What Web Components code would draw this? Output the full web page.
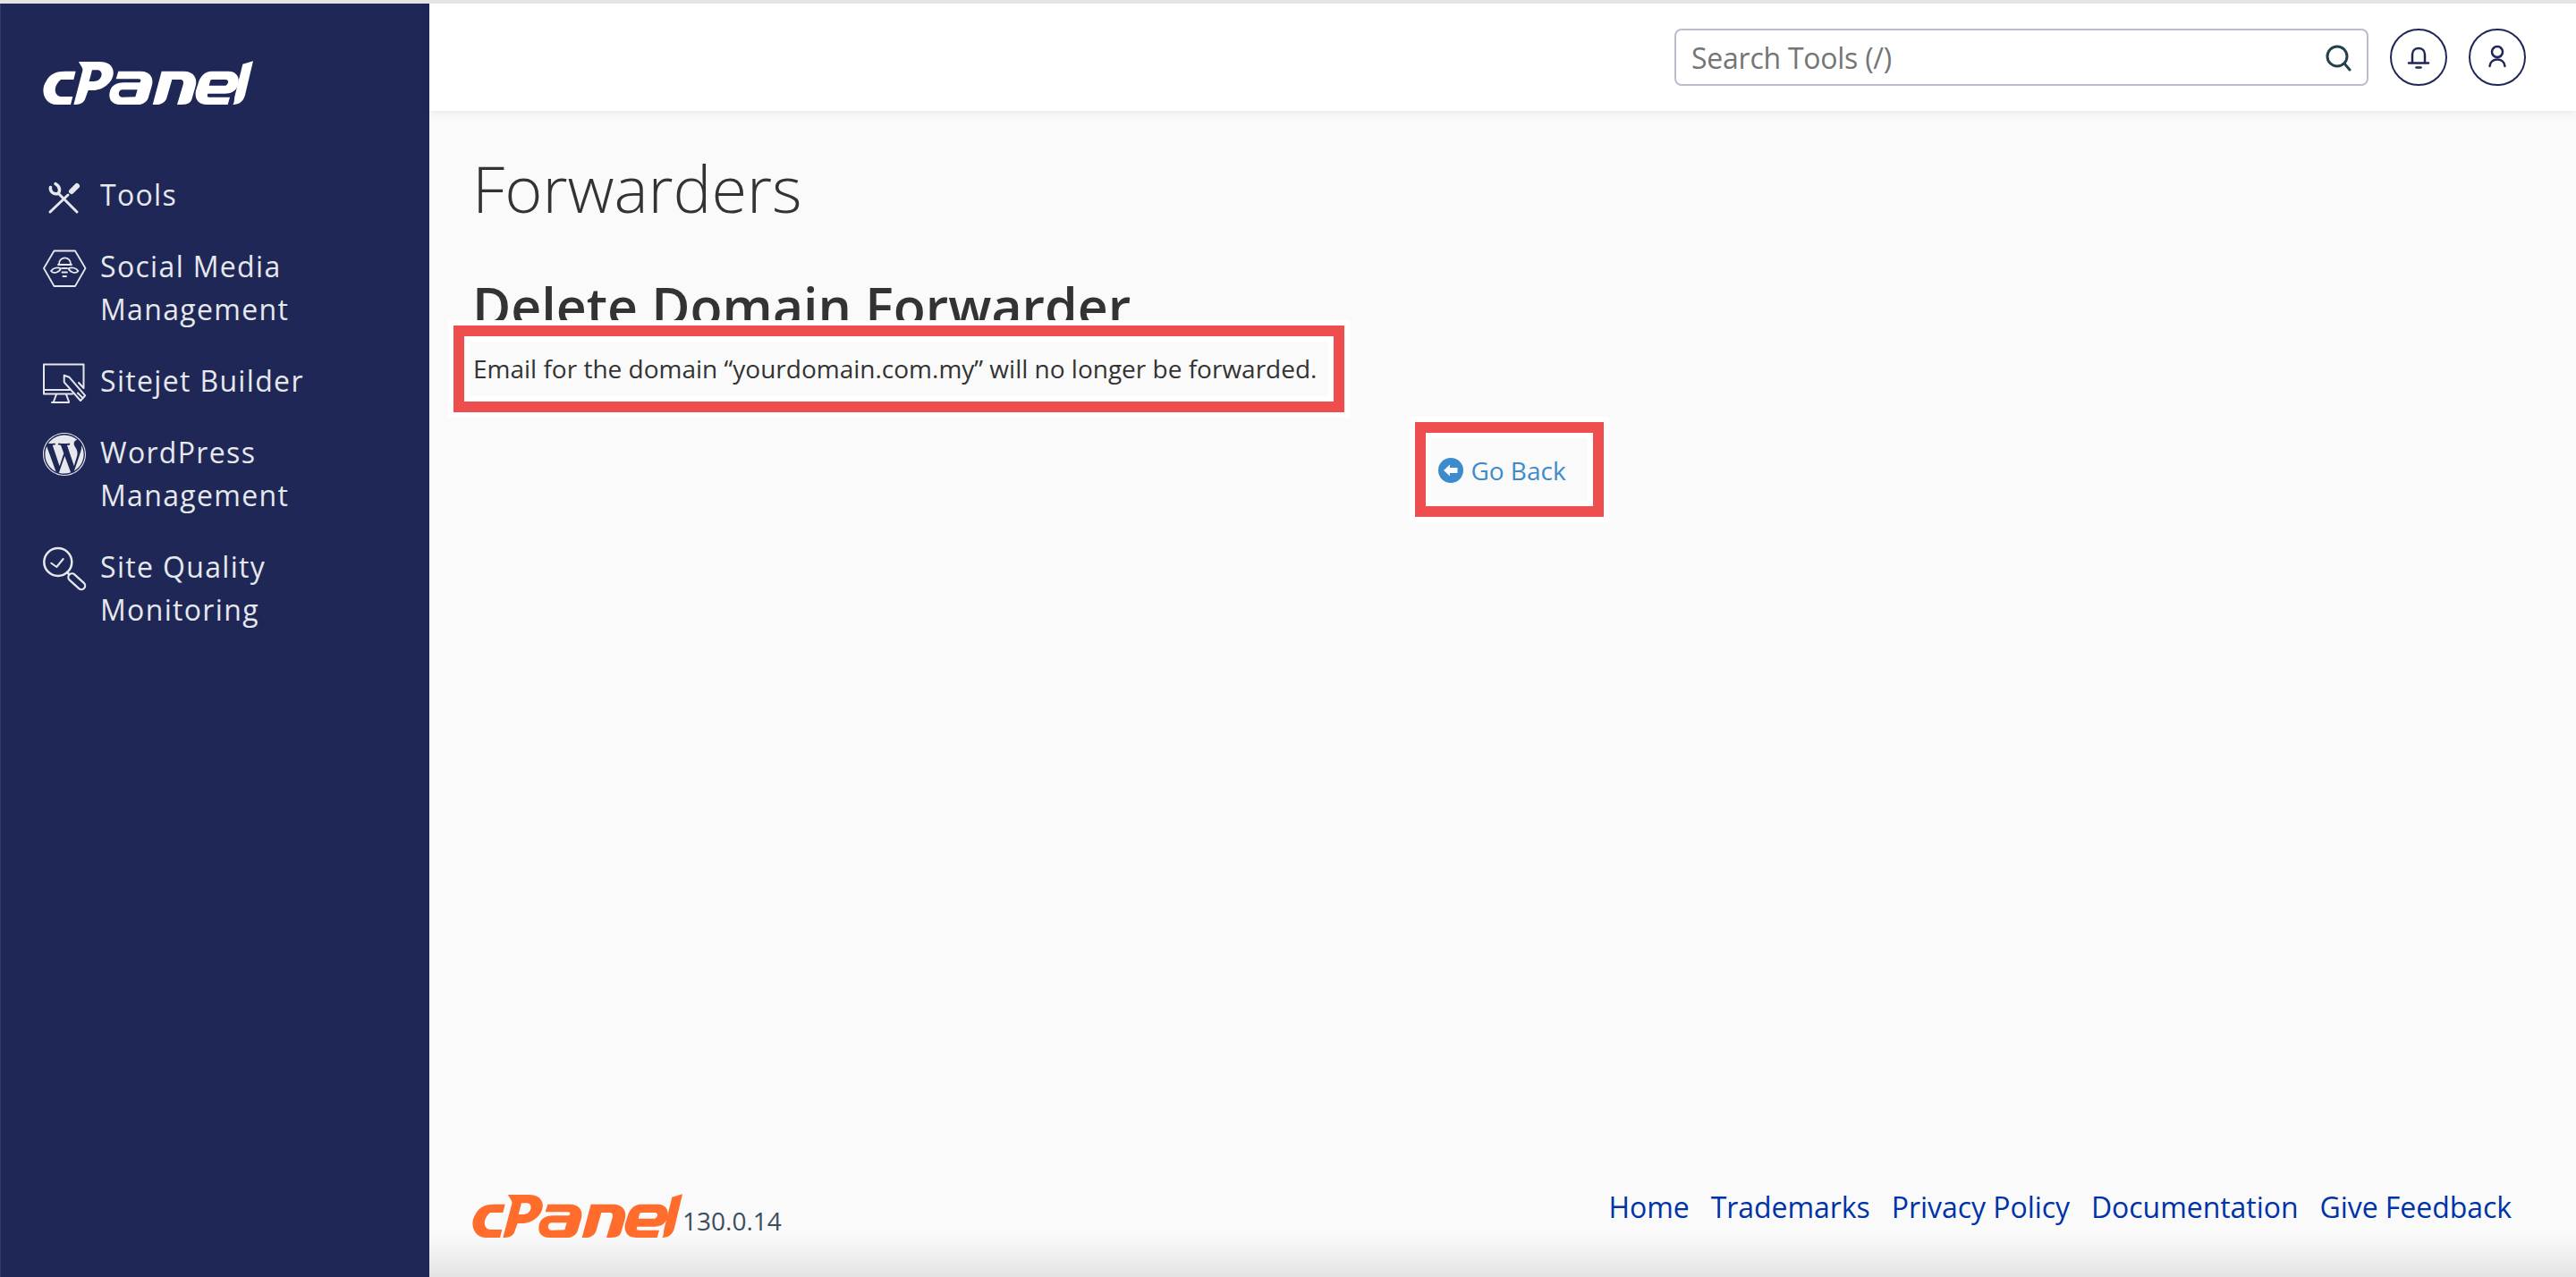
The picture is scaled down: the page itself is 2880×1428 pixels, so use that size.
<!DOCTYPE html>
<html lang="en">
<head>
<meta charset="utf-8">
<title>Forwarders</title>
<style>
  html, body { margin: 0; height: 100%; }
  body { font-family: "Open Sans", "Liberation Sans", sans-serif; background: #fafafa; }
</style>
</head>
<body>
<cp-app>
  <cp-sidebar slot="sidebar">
    <cp-nav-item icon="tools">Tools</cp-nav-item>
    <cp-nav-item icon="social">Social Media<br>Management</cp-nav-item>
    <cp-nav-item icon="sitejet">Sitejet Builder</cp-nav-item>
    <cp-nav-item icon="wordpress">WordPress<br>Management</cp-nav-item>
    <cp-nav-item icon="quality">Site Quality<br>Monitoring</cp-nav-item>
  </cp-sidebar>
  <cp-topbar slot="topbar"></cp-topbar>
  <cp-page heading="Forwarders" subheading="Delete Domain Forwarder">
    <cp-highlight>Email for the domain “yourdomain.com.my” will no longer be forwarded.</cp-highlight>
    <cp-back-link>Go Back</cp-back-link>
  </cp-page>
  <cp-footer slot="footer" version="130.0.14"></cp-footer>
</cp-app>

<script>
  // cPanel wordmark, used white in the sidebar and orange in the footer
  class CpLogo extends HTMLElement {
    constructor() {
      super();
      this.attachShadow({ mode: 'open' });
      this.shadowRoot.innerHTML = `
        <style>
          :host { display: block; width: 235px; height: 50px; color: inherit; }
          svg { display: block; width: 100%; height: 100%; fill: currentColor; }
        </style>
        <svg viewBox="25 25 705 150" preserveAspectRatio="none" role="img" aria-label="cPanel">
          <path d="M135 60L100 60C70 60 48 68 35 95C15 125 30 172 72 172L118 172L125 145L85 145C62 142 58 110 85 88L128 88Z"/>
          <path fill-rule="evenodd" d="M145 28L215 28C262 28 270 65 254 90C240 112 215 124 190 124L177 124L167 152C162 166 150 172 135 172L128 172L158 58C160 48 150 40 145 28ZM190 56L208 56C223 56 226 75 216 85C210 92 204 94 195 94L180 94Z"/>
          <path fill-rule="evenodd" d="M278 60L352 60C387 60 398 85 390 110L378 150C372 165 358 172 342 172L285 172C253 172 243 150 250 126C256 106 275 98 295 98L350 98L353 92C354 88 352 86 345 86L270 86ZM290 122L342 122L335 146L290 147C276 147 276 124 290 122Z"/>
          <path d="M423 60L497 60C532 60 544 85 537 110L524 155C519 168 507 172 490 172L475 172L495 105C498 93 494 88 484 88L458 88L440 150C435 165 420 172 405 172L393 172Z"/>
          <path fill-rule="evenodd" d="M590 60L647 60C677 60 688 85 678 110C670 128 657 135 635 135L578 135C574 145 577 147 587 147L652 147L645 172L575 172C543 172 533 150 538 125L546 100C553 75 570 60 590 60ZM592 88L638 88C648 88 650 100 638 108L582 108L585 97C586 91 588 88 592 88Z"/>
          <path d="M695 36L730 26L703 140C697 162 684 172 662 172C668 165 666 155 668 145Z"/>
        </svg>
      `;
    }
  }
  customElements.define('cp-logo', CpLogo);

  const NAV_ICONS = {
    tools: `
      <path d="M8 43L28 24" stroke-width="3"/>
      <path d="M32 20L38 14" stroke-width="6"/>
      <path d="M18 23L38 43" stroke-width="3"/>
      <path d="M8.500 15.500C7.500 20 12 24 16.500 22.500C19.500 20.500 19.500 14.500 14 11.500" stroke-width="3.500"/>`,
    social: `
      <path d="M12.500 6.500L36 6.500L47.500 26L36 46L12.500 46L1 26Z" stroke-width="1.800"/>
      <path d="M18 21.500C18 12 31 12 31 21.500" stroke-width="1.800"/>
      <path d="M17 22L32 22" stroke-width="1.800"/>
      <path d="M9 29C12 25 17 25 20 26C19 30 12 33 9 29Z" stroke-width="1.800"/>
      <path d="M39.500 29C36.500 25 31.500 25 28.500 26C29.500 30 36.500 33 39.500 29Z" stroke-width="1.800"/>
      <path d="M21.500 26L27 26M21.500 30.500L27 30.500M22.500 35L26 35" stroke-width="1.800"/>`,
    sitejet: `
      <path d="M40 26L45.500 32L45.500 5.500L1 5.500L1 38.500L33 38.500" stroke-width="2"/>
      <path d="M1 34L30 34" stroke-width="2"/>
      <path d="M15 39L12 47M26 39L29 47M10 48L29 48" stroke-width="2"/>
      <path d="M23.700 17.700L29.300 19.700L47.200 40.300L42 46L23.700 25.300Z" fill="#1f2756" stroke-width="2"/>
      <path d="M39 37.500L44.500 43" stroke-width="2"/>`,
    wordpress: `
      <g transform="translate(0 2) scale(2)" fill="currentColor" stroke="none" fill-rule="evenodd">
        <path d="M21.469 6.825c.84 1.537 1.318 3.3 1.318 5.175 0 3.979-2.156 7.456-5.363 9.325l3.295-9.527c.615-1.54.82-2.771.82-3.864 0-.405-.026-.78-.07-1.11m-7.981.105c.647-.03 1.232-.105 1.232-.105.582-.075.514-.93-.067-.899 0 0-1.755.135-2.88.135-1.064 0-2.85-.15-2.85-.15-.585-.03-.661.855-.075.885 0 0 .54.061 1.125.09l1.68 4.605-2.37 7.08L5.354 6.9c.649-.03 1.234-.1 1.234-.1.585-.075.516-.93-.065-.896 0 0-1.746.138-2.874.138-.2 0-.438-.008-.69-.015C4.911 3.15 8.235 1.215 12 1.215c2.809 0 5.365 1.072 7.286 2.833-.046-.003-.091-.009-.141-.009-1.06 0-1.812.923-1.812 1.914 0 .89.513 1.643 1.06 2.531.411.72.89 1.643.89 2.977 0 .915-.354 2-.821 3.479l-1.075 3.585-3.9-11.61.001.014zM12 22.784c-1.059 0-2.081-.153-3.048-.437l3.237-9.406 3.315 9.087c.024.053.05.101.078.149-1.12.393-2.325.609-3.582.609M1.211 12c0-1.564.336-3.05.935-4.39L7.29 21.709C3.694 19.96 1.212 16.271 1.211 12M12 0C5.385 0 0 5.385 0 12s5.385 12 12 12 12-5.385 12-12S18.615 0 12 0m0 23.450C5.688 23.450.55 18.312.55 12 .55 5.688 5.688.55 12 .55S23.450 5.688 23.450 12 18.312 23.450 12 23.450"/>
      </g>`,
    quality: `
      <circle cx="16.800" cy="18.500" r="15.500" stroke-width="2.500"/>
      <path d="M9.300 19.700L15.300 24L22.700 15" stroke-width="2"/>
      <path d="M27 30L31 34" stroke-width="2.500"/>
      <path d="M32.500 35.500L43 45" stroke-width="10.500"/>
      <path d="M32.500 35.500L43 45" stroke="#1f2756" stroke-width="6"/>`
  };

  class CpNavItem extends HTMLElement {
    constructor() {
      super();
      this.attachShadow({ mode: 'open' });
    }

    connectedCallback() {
      const icon = NAV_ICONS[this.getAttribute('icon')] || '';
      this.shadowRoot.innerHTML = `
        <style>
          :host {
            display: flex;
            gap: 16px;
            font-size: 32px;
            line-height: 48px;
            letter-spacing: 1.33px;
            color: #e6e8ee;
          }
          svg {
            flex: none;
            width: 48px;
            height: 48px;
            overflow: visible;
            fill: none;
            stroke: currentColor;
            stroke-linecap: round;
            stroke-linejoin: round;
          }
        </style>
        <svg viewBox="0 0 48 48" aria-hidden="true">${icon}</svg>
        <div><slot></slot></div>
      `;
    }
  }
  customElements.define('cp-nav-item', CpNavItem);

  class CpSidebar extends HTMLElement {
    constructor() {
      super();
      this.attachShadow({ mode: 'open' });
      this.shadowRoot.innerHTML = `
        <style>
          :host {
            display: block;
            box-sizing: border-box;
            width: 480px;
            padding: 64px 0 0 48px;
            background: #1f2756;
            border-left: 1px solid #343b68;
            color: #fff;
          }
          cp-logo { margin: 0 0 76px -1px; }
          nav { display: flex; flex-direction: column; gap: 32px; margin-left: -1px; }
        </style>
        <cp-logo></cp-logo>
        <nav><slot></slot></nav>
      `;
    }
  }
  customElements.define('cp-sidebar', CpSidebar);

  class CpSearch extends HTMLElement {
    constructor() {
      super();
      this.attachShadow({ mode: 'open' });
      this.shadowRoot.innerHTML = `
        <style>
          :host {
            display: flex;
            align-items: center;
            justify-content: space-between;
            box-sizing: border-box;
            width: 776px;
            height: 64px;
            padding: 0 16px 0 17px;
            background: #fff;
            border: 2px solid #babdcd;
            border-radius: 8px;
            font-size: 32px;
            letter-spacing: -0.25px;
            color: #757575;
          }
          svg { width: 32px; height: 32px; fill: none; stroke: #24404c; stroke-width: 3; stroke-linecap: round; }
        </style>
        <span><slot></slot></span>
        <svg viewBox="0 0 32 32" aria-hidden="true">
          <circle cx="15" cy="15" r="11"/>
          <path d="M23 23L29 30"/>
        </svg>
      `;
    }
  }
  customElements.define('cp-search', CpSearch);

  class CpRoundButton extends HTMLElement {
    constructor() {
      super();
      this.attachShadow({ mode: 'open' });
      this.shadowRoot.innerHTML = `
        <style>
          :host {
            display: flex;
            align-items: center;
            justify-content: center;
            box-sizing: border-box;
            width: 64px;
            height: 64px;
            border: 2px solid #1f2756;
            border-radius: 50%;
            color: #1f2756;
          }
          ::slotted(svg) { width: 32px; height: 32px; }
        </style>
        <slot></slot>
      `;
    }
  }
  customElements.define('cp-round-button', CpRoundButton);

  class CpTopbar extends HTMLElement {
    constructor() {
      super();
      this.attachShadow({ mode: 'open' });
      this.shadowRoot.innerHTML = `
        <style>
          :host {
            display: flex;
            align-items: center;
            justify-content: flex-end;
            gap: 24px;
            box-sizing: border-box;
            height: 120px;
            padding-right: 56px;
            background: #fff;
            box-shadow: 0 2px 10px rgba(0, 0, 0, .08);
          }
          svg { fill: none; stroke: currentColor; stroke-width: 2.5; stroke-linecap: round; stroke-linejoin: round; }
        </style>
        <cp-search>Search Tools (/)</cp-search>
        <cp-round-button>
          <svg viewBox="0 0 32 32" aria-hidden="true">
            <path d="M9 22L9 13C9 3.500 23 3.500 23 13L23 22"/>
            <path d="M5 22.500L27 22.500"/>
            <path d="M13.500 27.500L18.500 27.500"/>
          </svg>
        </cp-round-button>
        <cp-round-button>
          <svg viewBox="0 0 32 32" aria-hidden="true">
            <circle cx="16" cy="10" r="6"/>
            <path d="M7.500 26C8 16 24 16 24.500 26"/>
          </svg>
        </cp-round-button>
      `;
    }
  }
  customElements.define('cp-topbar', CpTopbar);

  // red annotation box, white halo on both sides of the red
  class CpHighlight extends HTMLElement {
    constructor() {
      super();
      this.attachShadow({ mode: 'open' });
      this.shadowRoot.innerHTML = `
        <style>
          :host {
            display: block;
            position: relative;
            width: fit-content;
            padding: 6px;
            background: #fff;
          }
          .frame { border: 12px solid #ef4e4e; padding: 6px; background: #fff; }
          .inner { background: #fafafa; padding: var(--inner-padding, 0); }
        </style>
        <div class="frame"><div class="inner"><slot></slot></div></div>
      `;
    }
  }
  customElements.define('cp-highlight', CpHighlight);

  class CpBackLink extends HTMLElement {
    constructor() {
      super();
      this.attachShadow({ mode: 'open' });
      this.shadowRoot.innerHTML = `
        <style>
          :host { display: flex; justify-content: center; padding-left: 15px; margin-top: -1px; }
          cp-highlight { font-size: 28px; line-height: 68px; color: #3d8bcd; }
          a { display: flex; align-items: center; gap: 8px; padding: 2px 24px 0 8px; color: inherit; text-decoration: none; }
          svg { width: 28px; height: 28px; flex: none; }
        </style>
        <cp-highlight>
          <a href="#">
            <svg viewBox="0 0 28 28" aria-hidden="true">
              <circle cx="14" cy="14" r="14" fill="#3d8bcd"/>
              <path d="M6 14L13 7.500L13 11L21.500 11L21.500 17L13 17L13 20.500Z" fill="#fafafa"/>
            </svg>
            <span><slot></slot></span>
          </a>
        </cp-highlight>
      `;
    }
  }
  customElements.define('cp-back-link', CpBackLink);

  class CpPage extends HTMLElement {
    constructor() {
      super();
      this.attachShadow({ mode: 'open' });
    }

    connectedCallback() {
      this.shadowRoot.innerHTML = `
        <style>
          :host { display: block; padding: 47px 48px 0; color: #333; }
          h1 { margin: 0 0 59px; font-size: 72px; font-weight: 300; line-height: 79px; }
          h2 { margin: 0 0 -17px; font-size: 59px; font-weight: 600; line-height: 66px; }
          ::slotted(cp-highlight) {
            margin-left: -27px;
            font-size: 28px;
            line-height: 40px;
            --inner-padding: 10px 13px 11px 4px;
          }
        </style>
        <h1>${this.getAttribute('heading')}</h1>
        <h2>${this.getAttribute('subheading')}</h2>
        <slot></slot>
      `;
    }
  }
  customElements.define('cp-page', CpPage);

  class CpFooter extends HTMLElement {
    constructor() {
      super();
      this.attachShadow({ mode: 'open' });
    }

    connectedCallback() {
      this.shadowRoot.innerHTML = `
        <style>
          :host {
            display: flex;
            justify-content: space-between;
            box-sizing: border-box;
            height: 108px;
            padding: 15px 72px 0 48px;
            background: linear-gradient(to bottom, rgba(0, 0, 0, 0) 55%, rgba(0, 0, 0, .09) 100%);
          }
          .brand { display: flex; align-items: flex-start; color: #ff6c2c; }
          .version { margin-top: 10px; font-size: 28px; line-height: 40px; color: #3e4d5c; }
          nav { display: flex; gap: 24px; margin-top: -9px; font-size: 32px; line-height: 48px; letter-spacing: -0.05px; height: 48px; }
          a { color: #0033a8; text-decoration: none; }
        </style>
        <div class="brand">
          <cp-logo></cp-logo>
          <span class="version">${this.getAttribute('version')}</span>
        </div>
        <nav>
          <a href="#">Home</a>
          <a href="#">Trademarks</a>
          <a href="#">Privacy Policy</a>
          <a href="#">Documentation</a>
          <a href="#">Give Feedback</a>
        </nav>
      `;
    }
  }
  customElements.define('cp-footer', CpFooter);

  class CpApp extends HTMLElement {
    constructor() {
      super();
      this.attachShadow({ mode: 'open' });
      this.shadowRoot.innerHTML = `
        <style>
          :host {
            display: flex;
            box-sizing: border-box;
            height: 100vh;
            border-top: 4px solid #e4e4e4;
            overflow: hidden;
          }
          ::slotted(cp-sidebar) { flex: none; }
          main { flex: 1; display: flex; flex-direction: column; min-width: 0; background: #fafafa; }
          .content { flex: 1; min-height: 0; }
        </style>
        <slot name="sidebar"></slot>
        <main>
          <slot name="topbar"></slot>
          <div class="content"><slot></slot></div>
          <slot name="footer"></slot>
        </main>
      `;
    }
  }
  customElements.define('cp-app', CpApp);
</script>
</body>
</html>
